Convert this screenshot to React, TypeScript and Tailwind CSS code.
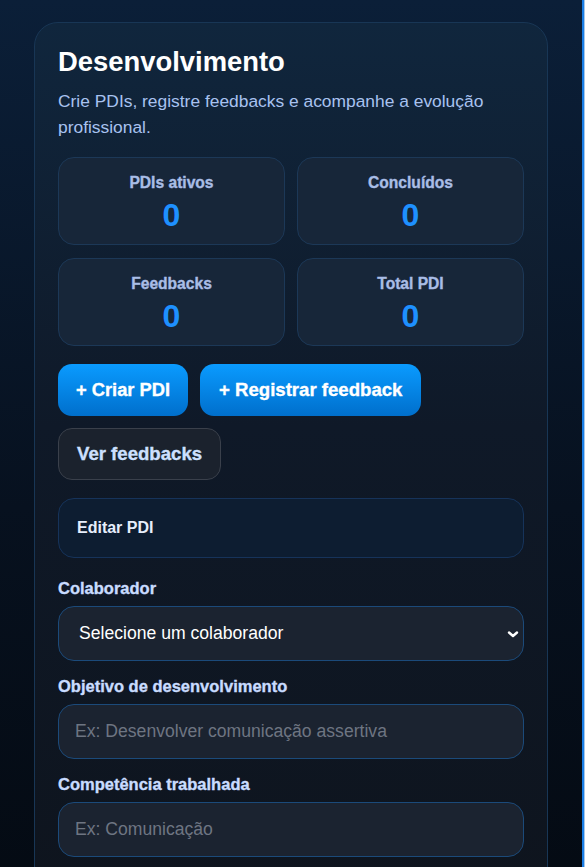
import React from 'react';

const stats = [
  { label: 'PDIs ativos', value: 0 },
  { label: 'Concluídos', value: 0 },
  { label: 'Feedbacks', value: 0 },
  { label: 'Total PDI', value: 0 },
];

function Field({ label, children }: { label: string; children: React.ReactNode }) {
  return (
    <div className="flex flex-col gap-[9px]">
      <label className="text-[16.5px] leading-[18px] font-bold text-[#c9dcff] [-webkit-text-stroke:0.35px_currentColor]">
        {label}
      </label>
      {children}
    </div>
  );
}

function TextInput({ placeholder }: { placeholder: string }) {
  return (
    <input
      type="text"
      placeholder={placeholder}
      className="h-[55px] w-full rounded-[16px] border border-[#1b4a7a] bg-[#1b2330] px-4 text-[17.6px] text-white placeholder:text-[#6e7582] outline-none"
    />
  );
}

export default function App() {
  return (
    <div className="flex min-h-screen bg-[linear-gradient(180deg,#0b1f38_0%,#07111f_55%,#040a12_100%)] font-['Liberation_Sans',Arial,sans-serif]">
      <main className="flex-1 px-[34px] pt-[22px]">
        <section className="rounded-[24px] border border-[#183655] bg-[linear-gradient(180deg,#10263d_0%,#0f1928_45%,#0e141d_100%)] px-[23px] pt-[23px] pb-16">
          <h1 className="text-[27.4px] leading-[32px] font-bold text-white">Desenvolvimento</h1>
          <p className="mt-[10px] text-[17.4px] leading-[26px] text-[#a8c2f0]">
            Crie PDIs, registre feedbacks e acompanhe a evolução profissional.
          </p>

          <div className="mt-[17px] grid grid-cols-2 gap-x-[12px] gap-y-[13px]">
            {stats.map((s) => (
              <div
                key={s.label}
                className="flex h-[88px] flex-col items-center justify-center gap-[6px] rounded-[16px] border border-[#1c3857] bg-[#172639] pt-[4px]"
              >
                <span className="text-[15.6px] leading-[18px] font-bold text-[#a9bde6] [-webkit-text-stroke:0.35px_currentColor]">
                  {s.label}
                </span>
                <span className="text-[32px] leading-[34px] font-bold text-[#1e90ff]">{s.value}</span>
              </div>
            ))}
          </div>

          <div className="mt-[18px] flex flex-wrap gap-[12px]">
            <button className="h-[52px] rounded-[14px] bg-[linear-gradient(180deg,#0a9bff_0%,#006fcc_100%)] px-[18px] text-[18.3px] font-bold text-white [-webkit-text-stroke:0.35px_currentColor]">
              + Criar PDI
            </button>
            <button className="h-[52px] rounded-[14px] bg-[linear-gradient(180deg,#0a9bff_0%,#006fcc_100%)] px-[19px] text-[18.6px] font-bold text-white [-webkit-text-stroke:0.35px_currentColor]">
              + Registrar feedback
            </button>
            <button className="h-[52px] rounded-[14px] border border-[#3a404b] bg-[#1b222d] px-[18px] text-[18.6px] font-bold text-[#cde0ff] [-webkit-text-stroke:0.35px_currentColor]">
              Ver feedbacks
            </button>
          </div>

          <div className="mt-[18px] flex h-[60px] items-center rounded-[16px] border border-[#16335a] bg-[#0d1d31] px-[18px]">
            <span className="text-[16px] font-bold text-[#e6eefc]">Editar PDI</span>
          </div>

          <div className="mt-[21px] flex flex-col gap-[16px]">
            <Field label="Colaborador">
              <div className="relative">
                <select className="h-[55px] w-full appearance-none rounded-[16px] border border-[#1b4a7a] bg-[#1b2330] pl-5 pr-10 text-[17.6px] text-white outline-none">
                  <option>Selecione um colaborador</option>
                </select>
                <svg
                  className="pointer-events-none absolute right-[5px] top-1/2 h-3 w-3 -translate-y-1/2"
                  viewBox="0 0 12 12"
                  fill="none"
                  stroke="white"
                  strokeWidth="2.4"
                  strokeLinecap="round"
                  strokeLinejoin="round"
                >
                  <path d="M2 4.5l4 3.5 4-3.5" />
                </svg>
              </div>
            </Field>
            <Field label="Objetivo de desenvolvimento">
              <TextInput placeholder="Ex: Desenvolver comunicação assertiva" />
            </Field>
            <Field label="Competência trabalhada">
              <TextInput placeholder="Ex: Comunicação" />
            </Field>
          </div>
        </section>
      </main>
      <div className="w-[3px] shrink-0 border-r border-[#a8c8e8] bg-[#1a7ee6]" />
    </div>
  );
}
